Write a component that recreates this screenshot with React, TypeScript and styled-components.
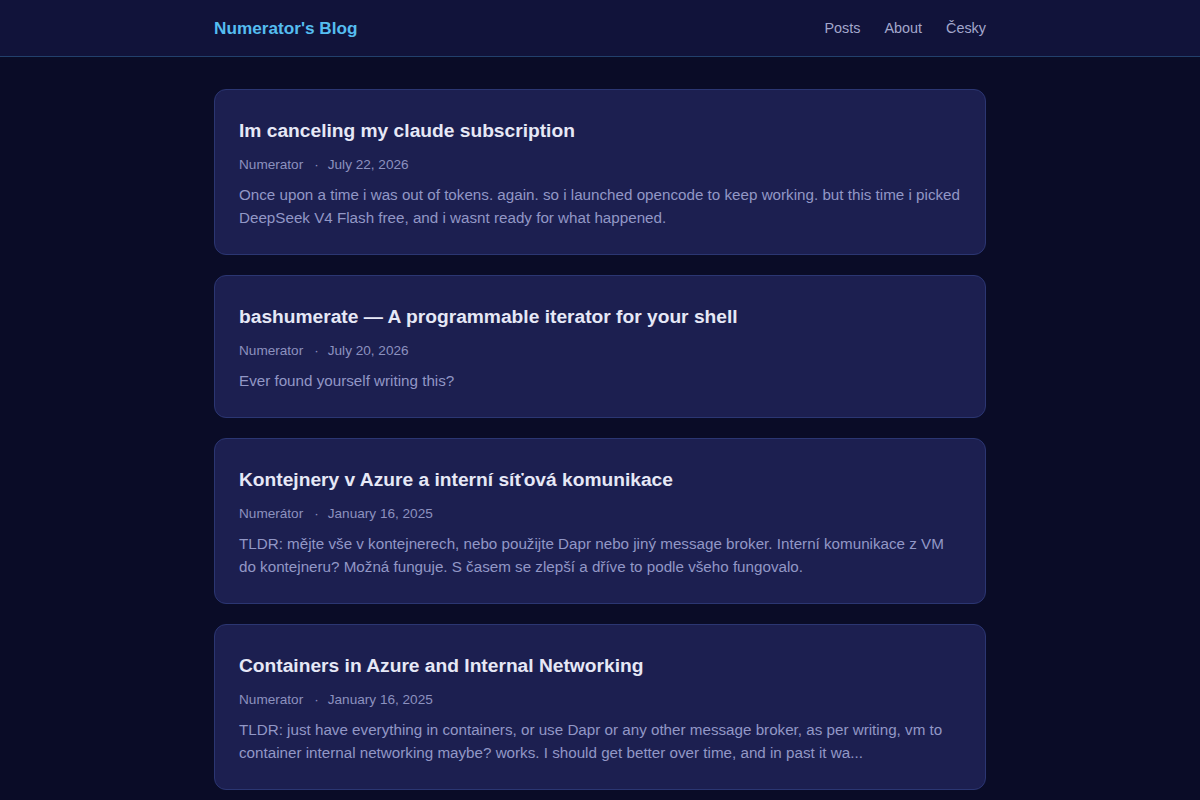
import React from "react";
import styled, { createGlobalStyle } from "styled-components";

const GlobalStyle = createGlobalStyle`
  html, body { margin: 0; padding: 0; }
  body {
    background: #0a0c27;
    font-family: "Liberation Sans", Arial, sans-serif;
    color: #e4e6f5;
  }
`;

const Header = styled.header`
  background: #11133a;
  border-bottom: 1px solid #22406c;
  height: 56px;
`;

const HeaderInner = styled.div`
  max-width: 772px;
  margin: 0 auto;
  height: 100%;
  display: flex;
  align-items: center;
  justify-content: space-between;
`;

const Logo = styled.a`
  color: #55bdf0;
  font-size: 17.2px;
  font-weight: 700;
  text-decoration: none;
`;

const Nav = styled.nav`
  display: flex;
  gap: 24px;
`;

const NavLink = styled.a`
  color: #a3a7cc;
  font-size: 14.4px;
  text-decoration: none;
`;

const Main = styled.main`
  max-width: 772px;
  margin: 0 auto;
  padding: 32px 0;
  display: flex;
  flex-direction: column;
  gap: 20px;
`;

const Card = styled.article`
  background: #1c1f50;
  border: 1px solid #2b3672;
  border-radius: 12px;
  padding: 24px 24px 25px;
`;

const Title = styled.h2`
  margin: 0 0 6px;
  font-size: 19.2px;
  line-height: 34px;
  font-weight: 700;
  color: #e6e8f6;
`;

const Meta = styled.div`
  font-size: 13.6px;
  line-height: 22px;
  color: #8c91bf;
  margin-bottom: 7px;
`;

const Dot = styled.span`
  margin: 0 9px 0 11px;
`;

const Excerpt = styled.p`
  margin: 0;
  font-size: 15.2px;
  line-height: 23px;
  color: #9297c6;
`;

const posts = [
  {
    title: "Im canceling my claude subscription",
    author: "Numerator",
    date: "July 22, 2026",
    excerpt:
      "Once upon a time i was out of tokens. again. so i launched opencode to keep working. but this time i picked DeepSeek V4 Flash free, and i wasnt ready for what happened.",
  },
  {
    title: "bashumerate — A programmable iterator for your shell",
    author: "Numerator",
    date: "July 20, 2026",
    excerpt: "Ever found yourself writing this?",
  },
  {
    title: "Kontejnery v Azure a interní síťová komunikace",
    author: "Numerátor",
    date: "January 16, 2025",
    excerpt:
      "TLDR: mějte vše v kontejnerech, nebo použijte Dapr nebo jiný message broker. Interní komunikace z VM do kontejneru? Možná funguje. S časem se zlepší a dříve to podle všeho fungovalo.",
  },
  {
    title: "Containers in Azure and Internal Networking",
    author: "Numerator",
    date: "January 16, 2025",
    excerpt:
      "TLDR: just have everything in containers, or use Dapr or any other message broker, as per writing, vm to container internal networking maybe? works. I should get better over time, and in past it wa...",
  },
];

export default function App() {
  return (
    <>
      <GlobalStyle />
      <Header>
        <HeaderInner>
          <Logo href="#">Numerator's Blog</Logo>
          <Nav>
            <NavLink href="#">Posts</NavLink>
            <NavLink href="#">About</NavLink>
            <NavLink href="#">Česky</NavLink>
          </Nav>
        </HeaderInner>
      </Header>
      <Main>
        {posts.map((p) => (
          <Card key={p.title}>
            <Title>{p.title}</Title>
            <Meta>
              {p.author}
              <Dot>·</Dot>
              {p.date}
            </Meta>
            <Excerpt>{p.excerpt}</Excerpt>
          </Card>
        ))}
      </Main>
    </>
  );
}
